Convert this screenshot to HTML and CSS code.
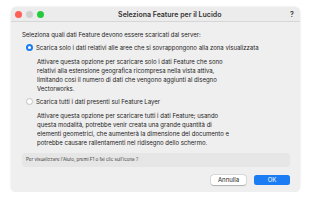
FILE: index.html
```html
<!DOCTYPE html>
<html>
<head>
<meta charset="utf-8">
<link rel="stylesheet" href="styles.css">
</head>
<body>
<div class="window">
  <div class="titlebar">
    <div class="lights">
      <span class="light red"></span>
      <span class="light gray"></span>
      <span class="light green"></span>
    </div>
    <div class="title">Seleziona Feature per il Lucido</div>
    <div class="help">?</div>
  </div>
  <div class="content">
    <div class="intro">Seleziona quali dati Feature devono essere scaricati dal server:</div>
    <div class="option">
      <span class="radio on"></span>
      <span class="label">Scarica solo i dati relativi alle aree che si sovrappongono alla zona visualizzata</span>
    </div>
    <div class="desc">Attivare questa opzione per scaricare solo i dati Feature che sono<br>relativi alla estensione geografica ricompresa nella vista attiva,<br>limitando così il numero di dati che vengono aggiunti al disegno<br>Vectorworks.</div>
    <div class="option">
      <span class="radio"></span>
      <span class="label">Scarica tutti i dati presenti sul Feature Layer</span>
    </div>
    <div class="desc">Attivare questa opzione per scaricare tutti i dati Feature; usando<br>questa modalità, potrebbe venir creata una grande quantità di<br>elementi geometrici, che aumenterà la dimensione del documento e<br>potrebbe causare rallentamenti nel ridisegno dello schermo.</div>
    <div class="hint">Per visualizzare l'Aiuto, premi F1 o fai clic sull'icona ?</div>
    <div class="buttons">
      <button class="btn cancel">Annulla</button>
      <button class="btn ok">OK</button>
    </div>
  </div>
</div>
</body>
</html>
```
FILE: styles.css
```css
* { box-sizing: border-box; }
body {
  margin: 0;
  background: #ffffff;
  font-family: "Inter", "Liberation Sans", sans-serif;
  color: #222;
}
.window {
  margin: 7px 0 0 11px;
  width: 289px;
  height: 185px;
  background: #efefef;
  border-radius: 6px;
  box-shadow: 0 0 2px rgba(0,0,0,0.15);
  overflow: hidden;
}
.titlebar {
  height: 15px;
  background: #ececec;
  border-bottom: 1px solid #d6d6d6;
  display: flex;
  align-items: center;
  padding: 0 4px 0 3.5px;
}
.lights { display: flex; gap: 4px; }
.light { width: 7px; height: 7px; border-radius: 50%; display: block; }
.red { background: #fe5f57; }
.gray { background: #d0d0d0; }
.green { background: #27c93f; }
.title {
  flex: 1;
  text-align: center;
  font-size: 7px;
  font-weight: 600;
  color: #333;
  padding-left: 8px;
}
.help {
  font-size: 7px;
  font-weight: 600;
  color: #333;
  width: 8px;
  text-align: center;
}
.content {
  padding: 8px 10px 0 11px;
  font-size: 6px;
  line-height: 9px;
}
.intro { margin-bottom: 4px; }
.option {
  display: flex;
  align-items: center;
  gap: 3px;
  padding-left: 4px;
  margin-bottom: 5px;
}
.radio {
  width: 7px; height: 7px;
  border-radius: 50%;
  background: #fff;
  border: 0.8px solid #c2c2c2;
  display: block;
  flex: none;
}
.radio.on {
  background: #fff;
  border: 2px solid #1b7cf3;
}
.desc {
  padding-left: 15px;
  margin-bottom: 4px;
}
.hint {
  margin-top: 6px;
  background: #e6e6e6;
  border-radius: 3px;
  height: 14px;
  font-size: 4.5px;
  line-height: 14px;
  padding-left: 4px;
  color: #444;
  width: 268px;
}
.buttons {
  display: flex;
  justify-content: flex-end;
  gap: 8px;
  margin-top: 8px;
  padding-right: 0;
}
.btn {
  font-family: "Inter", "Liberation Sans", sans-serif;
  font-size: 6px;
  height: 10px;
  width: 36px;
  border: none;
  border-radius: 2.5px;
  padding: 0;
  line-height: 10px;
}
.cancel {
  width: 35px;
  background: #fff;
  color: #222;
  box-shadow: 0 0 0 0.5px rgba(0,0,0,0.15), 0 0.5px 1px rgba(0,0,0,0.2);
}
.ok {
  background: #1b7cf3;
  color: #fff;
}
```
